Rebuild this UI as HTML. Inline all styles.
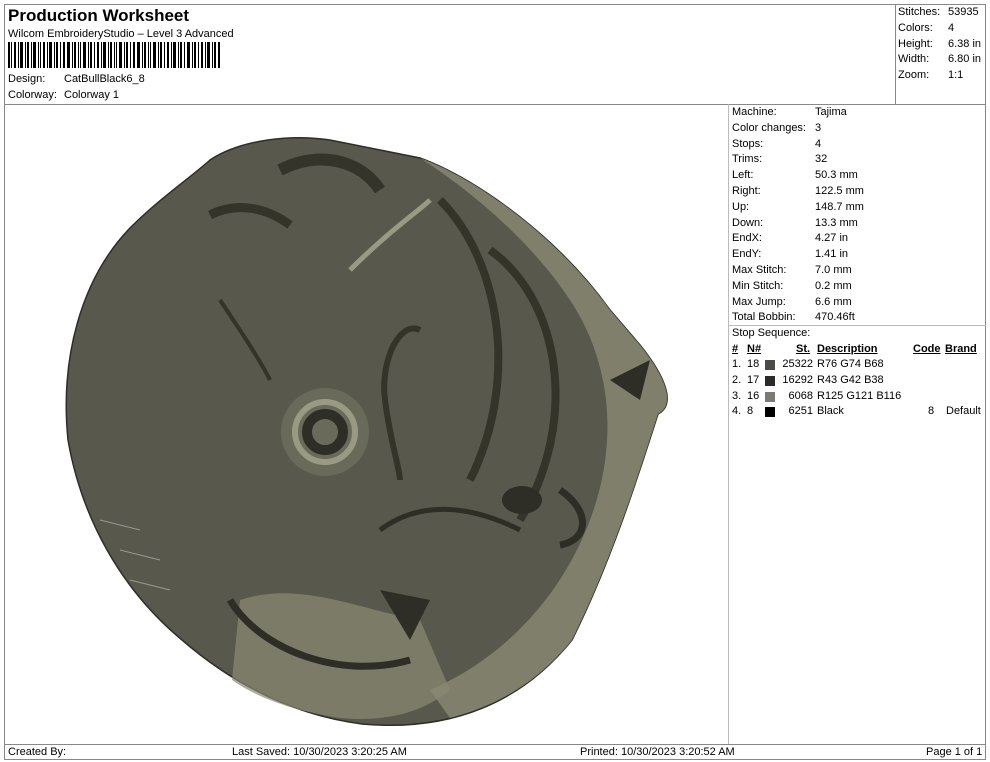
<!DOCTYPE html>
<html><head><meta charset="utf-8"><style>
body{margin:0;width:990px;height:762px;background:#fff;font-family:"Liberation Sans",sans-serif;color:#000;position:relative;overflow:hidden}
.a{position:absolute;white-space:nowrap}
.f{font-size:11px}
.r{font-size:11px;line-height:15.8px}
</style></head><body>
<div class="a" style="left:4px;top:4px;width:982px;height:756px;border:1px solid #888;box-sizing:border-box"></div>
<div class="a" style="left:4px;top:104px;width:982px;height:1px;background:#888"></div>
<div class="a" style="left:895px;top:4px;width:1px;height:100px;background:#888"></div>
<div class="a" style="left:728px;top:104px;width:1px;height:640px;background:#bbb"></div>
<div class="a" style="left:728px;top:325px;width:258px;height:1px;background:#bbb"></div>
<div class="a" style="left:4px;top:744px;width:982px;height:1px;background:#888"></div>

<div class="a" style="left:8px;top:6px;font-size:17px;font-weight:bold">Production Worksheet</div>
<div class="a f" style="left:8px;top:28px">Wilcom EmbroideryStudio – Level 3 Advanced</div>
<svg class="a" style="left:8px;top:42px" width="212" height="26">
<g fill="#000">
<rect x="0" width="2" height="26"/><rect x="3" width="1" height="26"/><rect x="6" width="2" height="26"/><rect x="10" width="1" height="26"/><rect x="12" width="3" height="26"/><rect x="17" width="1" height="26"/><rect x="19" width="2" height="26"/><rect x="23" width="1" height="26"/><rect x="25" width="3" height="26"/><rect x="30" width="1" height="26"/><rect x="32" width="1" height="26"/><rect x="35" width="2" height="26"/><rect x="39" width="1" height="26"/><rect x="41" width="3" height="26"/><rect x="46" width="1" height="26"/><rect x="48" width="2" height="26"/><rect x="52" width="1" height="26"/><rect x="55" width="2" height="26"/><rect x="59" width="3" height="26"/><rect x="64" width="1" height="26"/><rect x="66" width="2" height="26"/><rect x="70" width="1" height="26"/><rect x="72" width="1" height="26"/><rect x="75" width="3" height="26"/><rect x="80" width="1" height="26"/><rect x="82" width="2" height="26"/><rect x="86" width="1" height="26"/><rect x="89" width="2" height="26"/><rect x="93" width="1" height="26"/><rect x="95" width="3" height="26"/><rect x="100" width="1" height="26"/><rect x="102" width="2" height="26"/><rect x="106" width="1" height="26"/><rect x="108" width="1" height="26"/><rect x="111" width="3" height="26"/><rect x="116" width="1" height="26"/><rect x="118" width="2" height="26"/><rect x="122" width="1" height="26"/><rect x="125" width="2" height="26"/><rect x="129" width="3" height="26"/><rect x="134" width="1" height="26"/><rect x="136" width="2" height="26"/><rect x="140" width="1" height="26"/><rect x="142" width="1" height="26"/><rect x="145" width="3" height="26"/><rect x="150" width="1" height="26"/><rect x="152" width="2" height="26"/><rect x="156" width="1" height="26"/><rect x="159" width="2" height="26"/><rect x="163" width="1" height="26"/><rect x="165" width="3" height="26"/><rect x="170" width="1" height="26"/><rect x="172" width="2" height="26"/><rect x="176" width="1" height="26"/><rect x="179" width="3" height="26"/><rect x="184" width="1" height="26"/><rect x="186" width="2" height="26"/><rect x="190" width="1" height="26"/><rect x="193" width="2" height="26"/><rect x="197" width="1" height="26"/><rect x="199" width="3" height="26"/><rect x="204" width="1" height="26"/><rect x="206" width="2" height="26"/><rect x="210" width="2" height="26"/>
</g></svg>
<div class="a f" style="left:8px;top:73px">Design:</div><div class="a f" style="left:64px;top:73px">CatBullBlack6_8</div>
<div class="a f" style="left:8px;top:89px">Colorway:</div><div class="a f" style="left:64px;top:89px">Colorway 1</div>

<div class="a r" style="left:898px;top:5px">Stitches:<br>Colors:<br>Height:<br>Width:<br>Zoom:</div>
<div class="a r" style="left:948px;top:5px">53935<br>4<br>6.38 in<br>6.80 in<br>1:1</div>

<div class="a r" style="left:732px;top:105px">Machine:<br>Color changes:<br>Stops:<br>Trims:<br>Left:<br>Right:<br>Up:<br>Down:<br>EndX:<br>EndY:<br>Max Stitch:<br>Min Stitch:<br>Max Jump:<br>Total Bobbin:</div>
<div class="a r" style="left:815px;top:105px">Tajima<br>3<br>4<br>32<br>50.3 mm<br>122.5 mm<br>148.7 mm<br>13.3 mm<br>4.27 in<br>1.41 in<br>7.0 mm<br>0.2 mm<br>6.6 mm<br>470.46ft</div>
<div class="a r" style="left:732px;top:326px">Stop Sequence:</div>
<div class="a r" style="left:732px;top:342px;font-weight:bold;text-decoration:underline">#</div>
<div class="a r" style="left:747px;top:342px;font-weight:bold;text-decoration:underline">N#</div>
<div class="a r" style="left:796px;top:342px;font-weight:bold;text-decoration:underline">St.</div>
<div class="a r" style="left:817px;top:342px;font-weight:bold;text-decoration:underline">Description</div>
<div class="a r" style="left:913px;top:342px;font-weight:bold;text-decoration:underline">Code</div>
<div class="a r" style="left:945px;top:342px;font-weight:bold;text-decoration:underline">Brand</div>
<div class="a r" style="left:732px;top:357px">1.<br>2.<br>3.<br>4.</div>
<div class="a r" style="left:747px;top:357px">18<br>17<br>16<br>8</div>
<div class="a" style="left:765px;top:360px;width:10px;height:10px;background:#4c4a44"></div>
<div class="a" style="left:765px;top:376px;width:10px;height:10px;background:#2b2a26"></div>
<div class="a" style="left:765px;top:392px;width:10px;height:10px;background:#7d7974"></div>
<div class="a" style="left:765px;top:407px;width:10px;height:10px;background:#000"></div>
<div class="a r" style="left:776px;top:357px;width:37px;text-align:right">25322<br>16292<br>6068<br>6251</div>
<div class="a r" style="left:817px;top:357px">R76 G74 B68<br>R43 G42 B38<br>R125 G121 B116<br>Black</div>
<div class="a r" style="left:928px;top:404px">8</div>
<div class="a r" style="left:946px;top:404px">Default</div>

<svg class="a" style="left:0;top:0" width="728" height="744">
<path d="M210,160 C240,140 290,134 330,140 L420,158 C480,180 560,240 610,310 L640,345 C668,380 675,405 658,414 C640,470 612,560 572,640 C522,702 452,732 362,724 C300,716 240,690 182,640 C122,590 82,520 68,440 C60,360 80,280 130,228 C160,198 190,178 210,160 Z" fill="#58584c" stroke="#2e2e28" stroke-width="1.5"/>
<path d="M420,158 C480,180 560,240 610,310 L640,345 C668,380 675,405 658,414 C640,470 612,560 572,640 C540,680 500,705 450,718 L430,690 C500,660 560,600 590,520 C620,440 610,360 570,300 C530,240 470,190 420,158 Z" fill="#8a8a74" opacity="0.8"/>
<path d="M240,600 C300,580 360,610 420,620 L450,690 C420,715 380,722 340,718 C300,712 260,700 232,680 Z" fill="#8a8a74" opacity="0.7"/>
<path d="M440,200 C500,260 520,380 470,480" fill="none" stroke="#34342b" stroke-width="8"/>
<path d="M490,250 C560,300 580,420 520,520" fill="none" stroke="#34342b" stroke-width="8"/>
<path d="M350,270 C390,230 420,210 430,200" fill="none" stroke="#9a9a84" stroke-width="5"/>
<path d="M280,170 C320,150 360,160 380,190" fill="none" stroke="#34342b" stroke-width="12"/>
<path d="M210,215 C240,200 270,210 290,225" fill="none" stroke="#34342b" stroke-width="9"/>
<path d="M220,300 C240,330 260,360 270,380" fill="none" stroke="#34342b" stroke-width="4"/>
<path d="M420,330 C400,320 380,360 385,400 C390,440 400,470 400,480" fill="none" stroke="#34342b" stroke-width="6"/>
<circle cx="325" cy="432" r="44" fill="#6a6a5a"/>
<circle cx="325" cy="432" r="30" fill="none" stroke="#9a9a84" stroke-width="6"/>
<circle cx="325" cy="432" r="18" fill="none" stroke="#2e2e26" stroke-width="10"/>
<ellipse cx="522" cy="500" rx="20" ry="14" fill="#2e2e26"/>
<path d="M560,490 C590,510 590,540 560,545" fill="none" stroke="#2e2e26" stroke-width="7"/>
<path d="M380,590 L430,600 L410,640 Z" fill="#2e2e26"/>
<path d="M230,600 C260,650 340,680 410,660" fill="none" stroke="#2e2e26" stroke-width="7"/>
<path d="M610,380 L650,360 L640,400 Z" fill="#2e2e26"/>
<path d="M380,530 C420,500 470,505 520,530" fill="none" stroke="#2e2e26" stroke-width="5"/>
<path d="M100,520 L140,530 M120,550 L160,560 M130,580 L170,590" stroke="#999" stroke-width="1"/>
</svg>

<div class="a f" style="left:8px;top:746px">Created By:</div>
<div class="a f" style="left:232px;top:746px">Last Saved: 10/30/2023 3:20:25 AM</div>
<div class="a f" style="left:580px;top:746px">Printed: 10/30/2023 3:20:52 AM</div>
<div class="a f" style="left:926px;top:746px">Page 1 of 1</div>
</body></html>
